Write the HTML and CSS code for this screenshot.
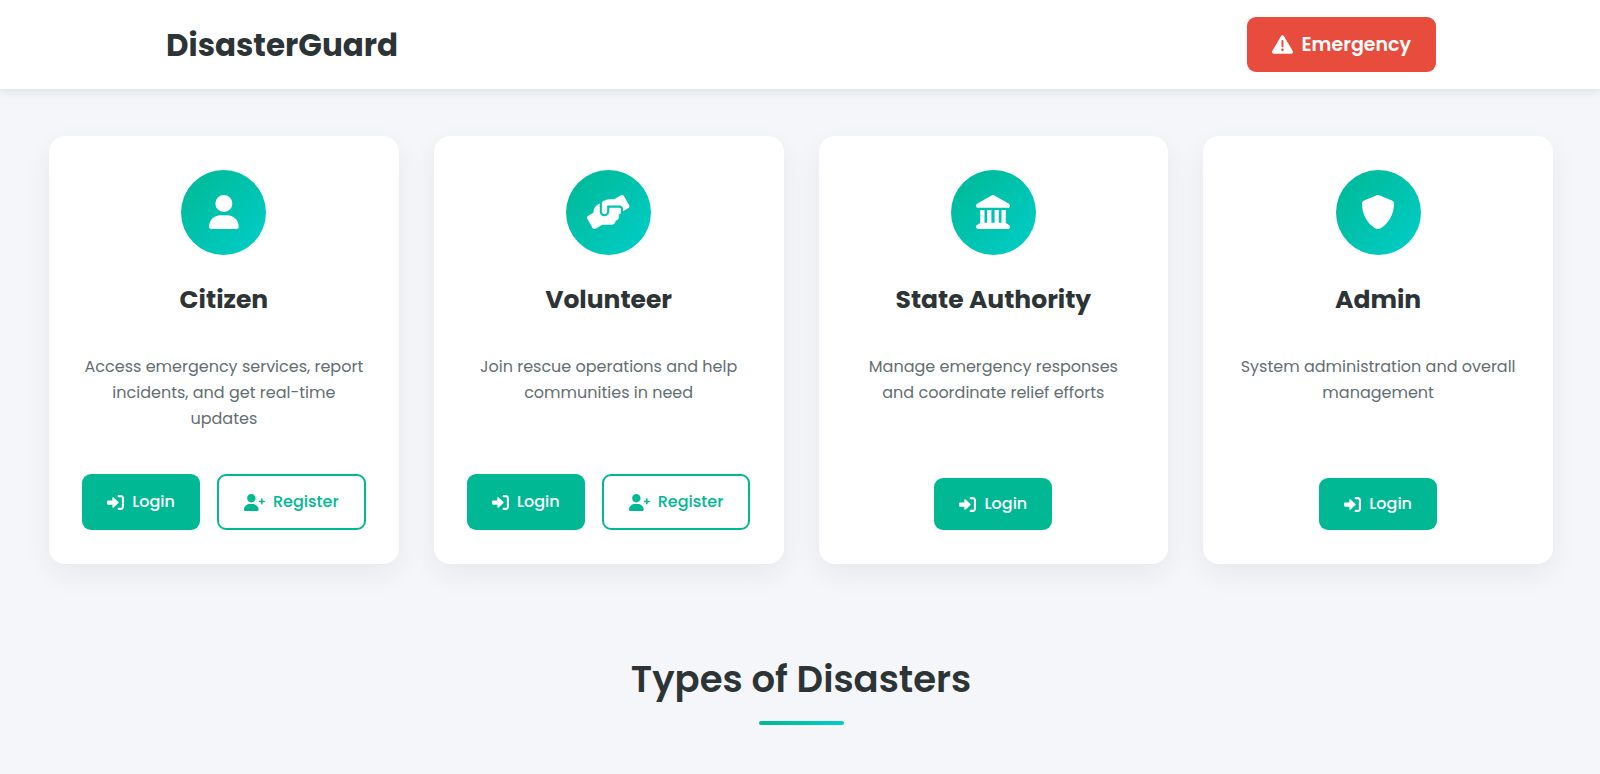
FILE: index.html
```html
<!DOCTYPE html>
<html lang="en">
<head>
<meta charset="utf-8">
<meta name="viewport" content="width=device-width, initial-scale=1">
<title>DisasterGuard</title>
<link rel="stylesheet" href="styles.css">
</head>
<body>
<svg class="sprite" aria-hidden="true">
  <symbol id="i-login" viewBox="0 0 512 512"><path d="M344.7 238.5l-144.1-136C193.7 95.97 183.4 94.17 174.6 97.95C165.8 101.8 160.1 110.4 160.1 120V192H32.02C14.33 192 0 206.3 0 224v64c0 17.68 14.33 32 32.02 32h128.1v72c0 9.578 5.707 18.25 14.51 22.05c8.803 3.781 19.03 1.984 26-4.594l144.1-136C354.3 264.4 354.3 247.6 344.7 238.5zM416 32h-64c-17.67 0-32 14.33-32 32s14.33 32 32 32h64c17.67 0 32 14.33 32 32v256c0 17.67-14.33 32-32 32h-64c-17.67 0-32 14.33-32 32s14.33 32 32 32h64c53.02 0 96-42.98 96-96V128C512 74.98 469 32 416 32z"/></symbol>
  <symbol id="i-register" viewBox="0 0 640 512"><path d="M224 256c70.7 0 128-57.31 128-128S294.7 0 224 0C153.3 0 96 57.31 96 128S153.3 256 224 256zM274.7 304H173.3C77.61 304 0 381.6 0 477.3C0 496.5 15.52 512 34.66 512h378.7C432.5 512 448 496.5 448 477.3C448 381.6 370.4 304 274.7 304zM616 200h-48v-48C568 138.8 557.3 128 544 128s-24 10.75-24 24v48h-48C458.8 200 448 210.8 448 224s10.75 24 24 24h48v48C520 309.3 530.8 320 544 320s24-10.75 24-24v-48h48C629.3 248 640 237.3 640 224S629.3 200 616 200z"/></symbol>
</svg>

<header class="header">
  <div class="header-inner">
    <div class="logo">DisasterGuard</div>
    <a class="emergency" href="#emergency">
      <svg class="icon icon-alert" viewBox="0 0 512 512" aria-hidden="true"><path d="M506.3 417l-213.3-364c-16.33-28-57.54-28-73.98 0l-213.2 364C-10.59 444.9 9.849 480 42.74 480h426.6C502.1 480 522.6 445 506.3 417zM232 168c0-13.25 10.75-24 24-24S280 154.8 280 168v128c0 13.25-10.75 24-23.1 24S232 309.3 232 296V168zM256 416c-17.36 0-31.44-14.08-31.44-31.44c0-17.36 14.07-31.44 31.44-31.44s31.44 14.08 31.44 31.44C287.4 401.9 273.4 416 256 416z"/></svg>
      <span>Emergency</span>
    </a>
  </div>
</header>

<main>
  <section class="cards">
    <article class="card">
      <div class="badge"><svg class="icon" viewBox="0 0 448 512" aria-hidden="true"><path d="M224 256A128 128 0 1 0 224 0a128 128 0 1 0 0 256zM274.7 304H173.3C77.61 304 0 381.6 0 477.3C0 496.5 15.52 512 34.66 512h378.7C432.5 512 448 496.5 448 477.3C448 381.6 370.4 304 274.7 304z"/></svg></div>
      <h2 class="card-title">Citizen</h2>
      <p class="card-text">Access emergency services, report incidents, and get real-time updates</p>
      <div class="actions">
        <a class="btn btn-solid" href="#login"><svg class="icon icon-login" aria-hidden="true"><use href="#i-login"/></svg><span>Login</span></a>
        <a class="btn btn-outline" href="#register"><svg class="icon icon-register" aria-hidden="true"><use href="#i-register"/></svg><span>Register</span></a>
      </div>
    </article>

    <article class="card">
      <div class="badge"><svg class="icon" viewBox="0 0 640 512" aria-hidden="true"><path d="M488 191.1h-152l.0001 51.86c.0001 37.66-27.08 72-64.55 75.77c-43.09 4.333-79.45-29.42-79.45-71.62V126.4l-24.51 14.73C123.2 167.8 96.04 215.7 96.04 267.5L16.04 313.8c-15.25 8.751-20.63 28.38-11.75 43.63l80 138.6c8.875 15.25 28.5 20.5 43.75 11.75l103.4-59.75h136.6c35.25 0 64-28.75 64-64c26.51 0 48-21.49 48-48V288h8c13.25 0 24-10.75 24-24l.0001-48C512 202.7 501.3 191.1 488 191.1zM635.7 154.5l-79.95-138.6c-8.875-15.25-28.5-20.5-43.75-11.75l-103.4 59.75h-62.57c-37.85 0-74.93 10.61-107.1 30.63C229.7 100.4 224 110.6 224 121.6l-.0004 126.4c0 22.13 17.88 40 40 40c22.13 0 40-17.88 40-40V159.1h184c30.93 0 56 25.07 56 56v28.5l80-46.13C639.3 189.4 644.5 169.8 635.7 154.5z"/></svg></div>
      <h2 class="card-title">Volunteer</h2>
      <p class="card-text">Join rescue operations and help communities in need</p>
      <div class="actions">
        <a class="btn btn-solid" href="#login"><svg class="icon icon-login" aria-hidden="true"><use href="#i-login"/></svg><span>Login</span></a>
        <a class="btn btn-outline" href="#register"><svg class="icon icon-register" aria-hidden="true"><use href="#i-register"/></svg><span>Register</span></a>
      </div>
    </article>

    <article class="card">
      <div class="badge"><svg class="icon" viewBox="0 0 512 512" aria-hidden="true"><path d="M240.1 4.2c9.8-5.6 21.9-5.6 31.8 0l171.8 98.1L448 104l0 .9 47.9 27.4c12.6 7.2 18.8 22 15.1 36s-16.4 23.8-30.9 23.8H32c-14.5 0-27.2-9.8-30.9-23.8s2.5-28.8 15.1-36L64 104.9V104l4.4-1.6L240.1 4.2zM64 224h64V416h40V224h64V416h48V224h64V416h40V224h64V420.3c.6 .3 1.2 .7 1.8 1.1l48 32c11.7 7.8 17 22.4 12.9 35.9S494.1 512 480 512H32c-14.1 0-26.5-9.2-30.6-22.7s1.1-28.1 12.9-35.9l48-32c.6-.4 1.2-.7 1.8-1.1V224z"/></svg></div>
      <h2 class="card-title">State Authority</h2>
      <p class="card-text">Manage emergency responses and coordinate relief efforts</p>
      <div class="actions">
        <a class="btn btn-solid" href="#login"><svg class="icon icon-login" aria-hidden="true"><use href="#i-login"/></svg><span>Login</span></a>
      </div>
    </article>

    <article class="card">
      <div class="badge"><svg class="icon" viewBox="0 0 512 512" aria-hidden="true"><path d="M496 127.1C496 381.3 309.1 512 255.1 512C204.9 512 16 385.3 16 127.1c0-19.41 11.7-36.89 29.61-44.28l191.1-80.01c4.906-2.031 13.06-3.441 18.44-3.441c5.281 0 13.58 1.41 18.44 3.441l191.1 80.01C484.3 91.1 496 108.6 496 127.1z"/></svg></div>
      <h2 class="card-title">Admin</h2>
      <p class="card-text">System administration and overall management</p>
      <div class="actions">
        <a class="btn btn-solid" href="#login"><svg class="icon icon-login" aria-hidden="true"><use href="#i-login"/></svg><span>Login</span></a>
      </div>
    </article>
  </section>

  <section class="disasters">
    <h2 class="section-title">Types of Disasters</h2>
  </section>
</main>
</body>
</html>
```
FILE: styles.css
```css
* {
  box-sizing: border-box;
  margin: 0;
}

body {
  background: #f5f6fa;
  color: #2d3436;
  font-family: Poppins, Inter, "Open Sans", sans-serif;
  font-size: 16px;
  line-height: 26px;
}

a {
  text-decoration: none;
}

.sprite {
  display: none;
}

.icon {
  display: block;
  flex: none;
  fill: currentColor;
}

.header {
  background: #fff;
  box-shadow: 0 2px 10px rgba(0, 0, 0, 0.1);
  padding: 17px 33px 17px 35px;
}

.header-inner {
  display: flex;
  align-items: center;
  justify-content: space-between;
  max-width: 1270px;
  margin: 0 auto;
}

.logo {
  font-size: 31px;
  font-weight: 700;
}

.emergency {
  display: flex;
  align-items: center;
  gap: 8px;
  padding: 14px 25px;
  border-radius: 9px;
  background: #e74c3c;
  color: #fff;
  font-size: 19px;
  font-weight: 600;
  line-height: 27px;
}

.icon-alert {
  width: 21px;
  height: 21px;
}

.cards {
  display: grid;
  grid-template-columns: repeat(4, 1fr);
  gap: 35px;
  padding: 47px 47px 51px 49px;
}

.card {
  display: flex;
  flex-direction: column;
  align-items: center;
  padding: 34px 33px;
  border-radius: 16px;
  background: #fff;
  box-shadow: 0 10px 30px rgba(0, 0, 0, 0.06);
  text-align: center;
}

.badge {
  display: flex;
  align-items: center;
  justify-content: center;
  width: 85px;
  height: 85px;
  padding-bottom: 2px;
  border-radius: 50%;
  background: linear-gradient(135deg, #00b894, #00cec9);
  color: #fff;
}

.badge .icon {
  height: 34px;
}

.card-title {
  margin: 25px 0 34px;
  font-size: 25px;
  font-weight: 700;
  line-height: 40px;
}

.card-text {
  flex: 1;
  margin-bottom: 42px;
  color: #636e72;
}

.actions {
  display: flex;
  justify-content: center;
  gap: 17px;
}

.btn {
  display: flex;
  align-items: center;
  gap: 8px;
  padding: 13px 25px;
  border-radius: 9px;
  font-weight: 500;
}

.btn-solid {
  background: #00b894;
  color: #fff;
}

.btn-outline {
  border: 2px solid #00b894;
  color: #00b894;
}

.icon-login {
  width: 17px;
  height: 17px;
}

.icon-register {
  width: 21px;
  height: 17px;
}

.disasters {
  padding: 35px 47px 35px 49px;
}

.section-title {
  font-size: 37px;
  font-weight: 600;
  line-height: 58px;
  text-align: center;
}

.section-title::after {
  content: "";
  display: block;
  width: 85px;
  height: 4px;
  margin: 13px auto 0;
  border-radius: 2px;
  background: linear-gradient(90deg, #00b894, #00cec9);
}
```
